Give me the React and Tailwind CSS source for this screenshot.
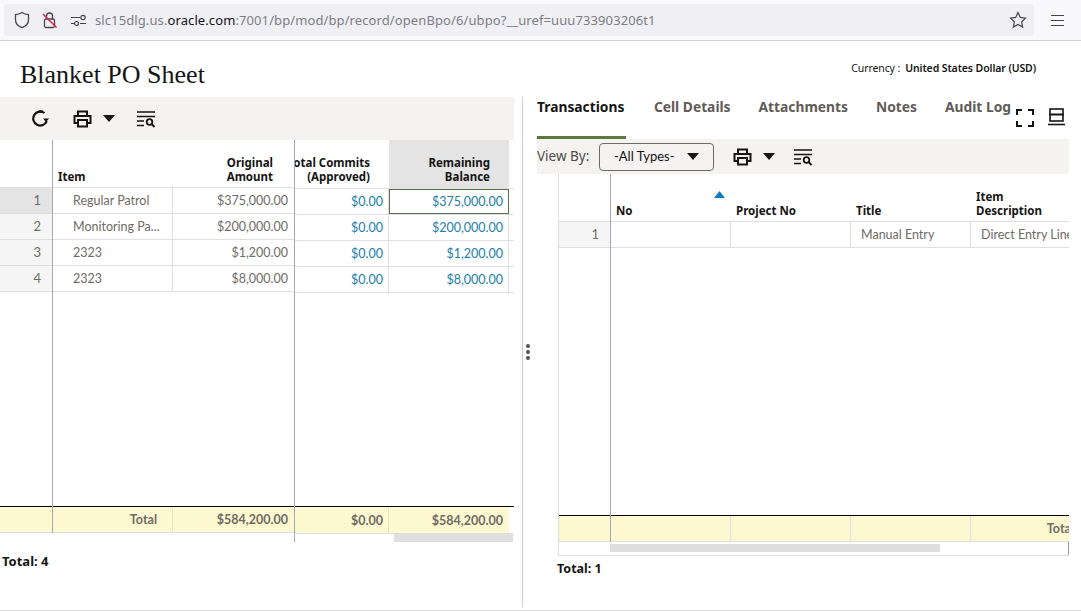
import React from 'react';

const sans = { fontFamily: '"Noto Sans", sans-serif' };
const data = { fontFamily: 'Lato, sans-serif' };

const leftRows = [
  { no: 1, item: 'Regular Patrol', amount: '$375,000.00', commits: '$0.00', balance: '$375,000.00', active: true },
  { no: 2, item: 'Monitoring Pa...', amount: '$200,000.00', commits: '$0.00', balance: '$200,000.00' },
  { no: 3, item: '2323', amount: '$1,200.00', commits: '$0.00', balance: '$1,200.00' },
  { no: 4, item: '2323', amount: '$8,000.00', commits: '$0.00', balance: '$8,000.00' }
];

const PrintIcon = () => (
  <svg width="19" height="18" viewBox="0 0 19 18" fill="none" stroke="#161513" strokeWidth="2">
    <path d="M5 6V1.5h9V6" />
    <path d="M5 13H1.5V6h16v7H14" />
    <rect x="5" y="10" width="9" height="6.5" />
  </svg>
);

const Caret = () => (
  <svg width="12" height="7" viewBox="0 0 12 7">
    <path d="M0 0h12L6 7z" fill="#161513" />
  </svg>
);

const FilterIcon = () => (
  <svg width="20" height="18" viewBox="0 0 20 18" fill="none" stroke="#161513">
    <path d="M1 2h18M1 6.5h18M1 11h7M1 15.5h7" strokeWidth="1.5" />
    <circle cx="13.5" cy="12" r="2.8" strokeWidth="1.8" />
    <path d="M15.5 14l3 3" strokeWidth="2" />
  </svg>
);

const RefreshIcon = () => (
  <svg width="17" height="17" viewBox="0 0 17 17" fill="none">
    <path d="M12.5 3A7 7 0 1 0 14.8 11" stroke="#161513" strokeWidth="2.2" />
    <path d="M11 8.5h6l-3 3.6z" fill="#161513" />
    <path d="M7 1.5h4" stroke="#161513" strokeWidth="2.2" />
  </svg>
);

const HeadCell = ({ className, children }) => (
  <div className={`flex shrink-0 items-end justify-end overflow-hidden whitespace-nowrap text-right text-[11.5px] font-bold leading-[14px] text-[#161513] ${className}`}>
    <span>{children}</span>
  </div>
);

const BrowserBar = () => (
  <div className="flex h-[41px] items-center gap-[17px] border-b border-[#cfcfd3] bg-[#f9f9fb] pl-1">
    <div className="flex h-8 w-[1030px] items-center rounded-[4px] bg-[#f0f0f4] pl-[9px]">
      <svg width="18" height="18" viewBox="0 0 18 18" fill="none" stroke="#45454d" strokeWidth="1.3">
        <path d="M9 1.5c2 1.3 4.3 2 6.5 2.2v5c0 3.700-2.600 6.500-6.500 8-3.900-1.500-6.500-4.300-6.500-8v-5C4.700 3.500 7 2.800 9 1.500z" />
      </svg>
      <svg className="ml-[10px]" width="18" height="18" viewBox="0 0 18 18" fill="none">
        <rect x="3.500" y="8" width="10" height="8.500" rx="1.500" stroke="#45454d" strokeWidth="1.300" />
        <path d="M5.500 8V5a3 3 0 0 1 6 0v3" stroke="#45454d" strokeWidth="1.300" />
        <path d="M2 3l13.500 13.500" stroke="#e22850" strokeWidth="1.600" />
      </svg>
      <svg className="ml-[11px]" width="17" height="14" viewBox="0 0 17 14" fill="none" stroke="#45454d" strokeWidth="1.200">
        <path d="M1 4.500h9M1 10.500h3.500M10 10.500h6" />
        <circle cx="13" cy="4.500" r="2.200" />
        <circle cx="6.500" cy="10.500" r="2" />
      </svg>
      <div className="ml-[8px] mt-[2px] whitespace-nowrap text-[13px] tracking-[0.1px] text-[#7d7d86]" style={sans}>
        slc15dlg.us.<span className="text-[#15141a]">oracle.com</span>:7001/bp/mod/bp/record/openBpo/6/ubpo?__uref=uuu733903206t1
      </div>
      <svg className="ml-auto mr-[7px]" width="18" height="18" viewBox="0 0 18 18" fill="none" stroke="#45454d" strokeWidth="1.200">
        <path d="M9 1.500l2.300 4.900 5.200.7-3.800 3.700.9 5.300L9 13.500l-4.600 2.600.9-5.300L1.500 7.100l5.200-.7z" />
      </svg>
    </div>
    <svg width="13" height="11" viewBox="0 0 13 11" stroke="#45454d" strokeWidth="1.100">
      <path d="M0 .5h13M0 5.500h13M0 10.500h13" />
    </svg>
  </div>
);

const LeftTable = () => (
  <div className="flex h-[402px] items-start">
    <div className="flex h-[393px] w-[52px] flex-col" style={data}>
      <div className="h-[48px] shrink-0 border-b border-[#dfdfdf]" />
      {leftRows.map(r => (
        <div
          key={r.no}
          className={`flex h-[26px] shrink-0 items-center justify-end border-b border-[#dfdfdf] pr-[11px] text-[13px] text-[#6f6b66] ${r.active ? 'bg-[#e4e4e4]' : 'bg-[#f5f5f5]'}`}
        >
          {r.no}
        </div>
      ))}
      <div className="flex-1" />
      <div className="h-[27px] shrink-0 border-t-[1.5px] border-b border-t-black border-b-[#dfdfdf] bg-[#fdf8cf]" />
    </div>

    <div className="flex h-[393px] w-[242px] flex-col border-l border-[#a3a8b8]">
      <div className="flex h-[48px] shrink-0 items-end border-b border-[#dfdfdf]">
        <div className="pb-[3px] pl-[5px] text-[11.5px] font-bold leading-[14px] text-[#161513]">Item</div>
        <HeadCell className="ml-auto pb-[3px] pr-[21px]">Original<br />Amount</HeadCell>
      </div>
      {leftRows.map(r => (
        <div key={r.no} className="flex h-[26px] shrink-0 border-b border-[#dfdfdf] text-[12.5px] text-[#6f6b66]" style={data}>
          <div className="flex w-[120px] shrink-0 items-center truncate border-r border-[#dfdfdf] pl-5 pt-[2px]">{r.item}</div>
          <div className="flex flex-1 items-center justify-end pr-[6px] pt-[2px]">{r.amount}</div>
        </div>
      ))}
      <div className="flex-1" />
      <div className="flex h-[27px] shrink-0 border-t-[1.5px] border-b border-t-black border-b-[#dfdfdf] bg-[#fdf8cf] text-[12.5px] text-[#6f6b66]" style={data}>
        <div className="flex w-[120px] shrink-0 items-center justify-end border-r border-[#e6e2c4] pr-[15px] pt-[2px] font-bold">Total</div>
        <div className="flex flex-1 items-center justify-end pr-[6px] pt-[2px] font-bold">$584,200.00</div>
      </div>
    </div>

    <div className="flex h-[402px] w-[220px] flex-col border-l border-[#a3a8b8]">
      <div className="flex h-[49px] shrink-0 border-b border-[#dfdfdf]">
        <HeadCell className="w-[94px] pb-[4px] pr-[19px]">Total Commits<br />(Approved)</HeadCell>
        <HeadCell className="w-[120px] bg-[#e4e4e4] pb-[4px] pr-[19px]">Remaining<br />Balance</HeadCell>
      </div>
      {leftRows.map(r => (
        <div key={r.no} className="flex h-[26px] shrink-0 border-b border-[#dfdfdf] text-[12.5px] text-[#1a7ea8]" style={data}>
          <div className="flex w-[94px] shrink-0 items-center justify-end border-r border-[#dfdfdf] pr-[5px] pt-[2px]">{r.commits}</div>
          <div className={`flex w-[120px] shrink-0 items-center justify-end border-r pr-[5px] pt-[2px] ${r.active ? 'border border-[#5c6e4c]' : 'border-[#dfdfdf]'}`}>{r.balance}</div>
        </div>
      ))}
      <div className="flex-1" />
      <div className="flex h-[28px] shrink-0 border-t-[1.5px] border-b border-t-black border-b-[#dfdfdf] text-[12.5px] text-[#6f6b66]" style={data}>
        <div className="flex w-[94px] shrink-0 items-center justify-end border-r border-[#e6e2c4] bg-[#fdf8cf] pr-[5px] pt-[2px] font-bold">$0.00</div>
        <div className="flex w-[120px] shrink-0 items-center justify-end bg-[#fdf8cf] pr-[6px] pt-[2px] font-bold">$584,200.00</div>
      </div>
      <div className="flex h-[8px] shrink-0 justify-end">
        <div className="mr-px h-full w-[119px] bg-[#dfdfdf]" />
      </div>
    </div>
  </div>
);

const RightTable = () => (
  <div className="ml-[21px] flex h-[382px] w-[511px] flex-col overflow-hidden border-b border-l border-[#dfdfdf]">
    <div className="flex h-[368px] shrink-0">
      <div className="flex w-[51px] shrink-0 flex-col" style={data}>
        <div className="h-[48px] shrink-0 border-b border-[#dfdfdf]" />
        <div className="flex h-[26px] shrink-0 items-center justify-end border-b border-[#dfdfdf] bg-[#f5f5f5] pr-[11px] text-[13px] text-[#6f6b66]">1</div>
        <div className="flex-1" />
        <div className="h-[27px] shrink-0 border-t-[1.5px] border-b border-t-black border-b-[#dfdfdf] bg-[#fdf8cf]" />
      </div>
      <div className="flex w-[460px] shrink-0 flex-col overflow-hidden border-l border-[#a3a8b8]">
        <div className="flex h-[48px] shrink-0 items-end border-b border-[#dfdfdf] pb-[3px] text-[11.5px] font-bold leading-[14px] text-[#161513]">
          <div className="relative w-[120px] shrink-0 pl-[5px]">
            No
            <svg className="absolute right-[6px] top-[-13px]" width="11" height="7" viewBox="0 0 11 7">
              <path d="M5.500 0L11 7H0z" fill="#0a7cc4" />
            </svg>
          </div>
          <div className="w-[120px] shrink-0 pl-[5px]">Project No</div>
          <div className="w-[120px] shrink-0 pl-[5px]">Title</div>
          <div className="w-[120px] shrink-0 pl-[5px]">Item<br />Description</div>
        </div>
        <div className="flex h-[26px] shrink-0 border-b border-[#dfdfdf] text-[12.5px] text-[#6f6b66]" style={data}>
          <div className="w-[120px] shrink-0 border-r border-[#dfdfdf]" />
          <div className="w-[120px] shrink-0 border-r border-[#dfdfdf]" />
          <div className="flex w-[120px] shrink-0 items-center border-r border-[#dfdfdf] pl-[10px] pt-[2px]">Manual Entry</div>
          <div className="flex w-[120px] shrink-0 items-center whitespace-nowrap pl-[10px] pt-[2px]">Direct Entry Line</div>
        </div>
        <div className="flex-1" />
        <div className="flex h-[27px] shrink-0 border-t-[1.5px] border-b border-t-black border-b-[#dfdfdf] bg-[#fdf8cf] text-[12.5px] font-bold text-[#6f6b66]" style={data}>
          <div className="w-[120px] shrink-0 border-r border-[#dfdfdf]" />
          <div className="w-[120px] shrink-0 border-r border-[#dfdfdf]" />
          <div className="w-[120px] shrink-0 border-r border-[#dfdfdf]" />
          <div className="flex w-[120px] shrink-0 items-center justify-end pr-[17px] pt-[2px]">Total</div>
        </div>
      </div>
    </div>
    <div className="flex flex-1 items-start pl-[51px] pt-[2px]">
      <div className="h-[8px] w-[330px] bg-[#dfdfdf]" />
      <div className="ml-auto mt-[-2px] h-[13px] w-px bg-[#9a9a9a]" />
    </div>
  </div>
);

const Tabs = () => (
  <div className="flex h-[42px] w-[474px] shrink-0 items-start gap-7 whitespace-nowrap text-[13.8px] font-bold leading-[20px] text-[#5f5b56]">
    <div className="h-[42px] w-[89px] border-b-[3px] border-[#5a7a3c] text-[#161513]">Transactions</div>
    <div>Cell Details</div>
    <div>Attachments</div>
    <div>Notes</div>
    <div>Audit Log</div>
  </div>
);

export default function App() {
  return (
    <div className="h-[611px] w-[1081px] overflow-hidden bg-white" style={sans}>
      <BrowserBar />
      <div className="flex h-[570px] flex-col border-b border-[#dcdcdc]">
        <div className="flex h-[56px] shrink-0 items-start justify-between pl-5 pr-[45px]">
          <h1 className="mt-[19px] text-[26px] leading-[30px] text-[#161513]" style={{ fontFamily: '"Liberation Serif", serif' }}>Blanket PO Sheet</h1>
          <div className="mt-5 whitespace-nowrap text-[10.5px] leading-[14px] tracking-[-0.1px] text-[#161513]">
            Currency :<span className="ml-[5px] font-semibold">United States Dollar (USD)</span>
          </div>
        </div>

        <div className="flex min-h-0 flex-1">
          <div className="w-[522px] shrink-0">
            <div className="flex h-[43px] w-[514px] items-center bg-[#f4f3f1] pl-8">
              <RefreshIcon />
              <div className="ml-[24px] flex items-center"><PrintIcon /></div>
              <div className="ml-[11px]"><Caret /></div>
              <div className="ml-[21px]"><FilterIcon /></div>
            </div>
            <LeftTable />
            <div className="mt-[10px] pl-[2px] text-[13px] font-bold leading-[18px] text-[#161513]">Total: 4</div>
          </div>

          <div className="relative mb-[3px] flex-1 border-l border-[#cfcfcf] pl-[14px]">
            <div className="absolute left-[3px] top-[247px] flex flex-col gap-[2px]">
              <span className="block h-[4px] w-[4px] rounded-full bg-[#55524e]" />
              <span className="block h-[4px] w-[4px] rounded-full bg-[#55524e]" />
              <span className="block h-[4px] w-[4px] rounded-full bg-[#55524e]" />
            </div>
            <div className="flex">
              <Tabs />
              <svg className="ml-[5px] mt-[12px]" width="18" height="18" viewBox="0 0 18 18" fill="none" stroke="#161513" strokeWidth="2">
                <path d="M1 6V1h5M12 1h5v5M1 12v5h5M12 17h5v-5" />
              </svg>
              <svg className="ml-[14px] mt-[11px]" width="17" height="18" viewBox="0 0 17 18" fill="none" stroke="#161513" strokeWidth="1.600">
                <rect x="2" y="1" width="13" height="5.500" />
                <rect x="2" y="6.500" width="13" height="6.500" />
                <path d="M0 16.500h17" />
              </svg>
            </div>
            <div className="flex h-[35px] w-[532px] items-center bg-[#f4f3f1] text-[13.5px] text-[#4f4b47]">
              <span className="w-[53px] shrink-0 whitespace-nowrap">View By:</span>
              <div className="ml-[9px] flex h-[28px] w-[115px] shrink-0 items-center rounded-[4px] border border-[#6f6b66] pl-[14px] pr-[14px] text-[13px] text-[#161513]" style={data}>
                <span>-All Types-</span>
                <span className="ml-auto"><Caret /></span>
              </div>
              <div className="ml-[19px]"><PrintIcon /></div>
              <div className="ml-[11px]"><Caret /></div>
              <div className="ml-[18px]"><FilterIcon /></div>
            </div>
            <RightTable />
            <div className="ml-5 mt-[4px] text-[12.5px] font-bold leading-[18px] text-[#161513]">Total: 1</div>
          </div>
        </div>
      </div>
    </div>
  );
}
